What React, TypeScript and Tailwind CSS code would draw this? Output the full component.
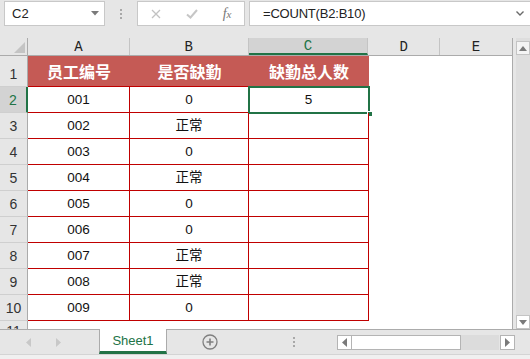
import React from "react";

type Row = { n: string; a: string; b: string; c: string };

const rows: Row[] = [
  { n: "2", a: "001", b: "0", c: "5" },
  { n: "3", a: "002", b: "正常", c: "" },
  { n: "4", a: "003", b: "0", c: "" },
  { n: "5", a: "004", b: "正常", c: "" },
  { n: "6", a: "005", b: "0", c: "" },
  { n: "7", a: "006", b: "0", c: "" },
  { n: "8", a: "007", b: "正常", c: "" },
  { n: "9", a: "008", b: "正常", c: "" },
  { n: "10", a: "009", b: "0", c: "" },
];

const sans = "font-['Liberation_Sans','Noto_Sans_CJK_SC',sans-serif]";
const cjk = "font-['Noto_Sans_CJK_SC',sans-serif]";

const TopBar: React.FC = () => (
  <div className="flex h-[38px] items-start pt-[1px]">
    <div className="ml-[4px] flex h-[25px] w-[101px] items-center justify-between border border-[#c8c8c8] bg-white pl-[7px] pr-[5px]">
      <span className="text-[13px] text-[#222]">C2</span>
      <svg width="8" height="5" viewBox="0 0 8 5">
        <path d="M0 0h8L4 4.5z" fill="#7a7a7a" />
      </svg>
    </div>
    <div className="flex h-[25px] w-[32px] flex-col items-center justify-center gap-[2px]">
      <span className="h-[2px] w-[2px] bg-[#a8a8a8]" />
      <span className="h-[2px] w-[2px] bg-[#a8a8a8]" />
      <span className="h-[2px] w-[2px] bg-[#a8a8a8]" />
    </div>
    <div className="flex h-[25px] w-[108px] items-center justify-around border border-[#c8c8c8] bg-white">
      <svg width="10" height="10" viewBox="0 0 10 10">
        <path d="M1 1l8 8M9 1l-8 8" stroke="#c2c2c2" strokeWidth="1.3" />
      </svg>
      <svg width="12" height="10" viewBox="0 0 12 10">
        <path d="M1 5.5l3.5 3L11 1" stroke="#c6c6c6" strokeWidth="2" fill="none" />
      </svg>
      <span className="font-['Liberation_Serif',serif] text-[14px] italic leading-none text-[#777]">
        f<span className="text-[11px]">x</span>
      </span>
    </div>
    <div className="ml-[4px] flex h-[25px] flex-1 items-center justify-between border-y border-l border-[#c8c8c8] bg-white pl-[13px] pr-[6px]">
      <span className="text-[13px] tracking-[-0.2px] text-[#222]">=COUNT(B2:B10)</span>
      <svg width="8" height="5" viewBox="0 0 8 5">
        <path d="M0.5 0.5L4 4l3.5-3.5" stroke="#6a6a6a" strokeWidth="1.4" fill="none" />
      </svg>
    </div>
  </div>
);

const ColHeaders: React.FC = () => (
  <div className="flex h-[18px] border-b border-[#ababab] bg-[#e6e6e6] font-['Liberation_Mono',monospace] text-[14px] leading-none text-[#222]">
    <div className="relative w-[28px] border-r border-[#ababab]">
      <svg className="absolute bottom-[2px] right-[2px]" width="11" height="11" viewBox="0 0 11 11">
        <path d="M11 0v11H0z" fill="#c4c4c4" />
      </svg>
    </div>
    <div className="flex w-[102px] items-center justify-center border-r border-[#c4c4c4]">A</div>
    <div className="flex w-[119px] items-center justify-center border-r border-[#c4c4c4]">B</div>
    <div className="flex w-[120px] items-center justify-center border-r border-[#c4c4c4] border-b-2 border-b-[#217346] bg-[#d3d3d3] text-[#217346]">C</div>
    <div className="flex w-[72px] items-center justify-center border-r border-[#c4c4c4]">D</div>
    <div className="flex w-[72px] items-center justify-center">E</div>
  </div>
);

const Grid: React.FC = () => (
  <div className="flex w-[513px] flex-col overflow-hidden border-r border-[#ababab] bg-white">
    <ColHeaders />
    <div className="flex h-[31px]">
      <div className={`flex w-[28px] items-end justify-center border-r border-b border-[#ababab] border-b-[#cfcfcf] bg-[#e6e6e6] pb-[1px] ${sans} text-[14px] text-[#333]`}>1</div>
      <div className={`flex w-[341px] border-b border-[#c00000] bg-[#c55a55] ${cjk} text-[16px] font-bold text-white`}>
        <div className="flex w-[102px] items-center justify-center">员工编号</div>
        <div className="flex w-[119px] items-center justify-center">是否缺勤</div>
        <div className="flex w-[120px] items-center justify-center">缺勤总人数</div>
      </div>
    </div>
    {rows.map((r, i) => (
      <div key={r.n} className={`relative flex h-[26px] ${sans} text-[13.5px] text-[#111]`}>
        <div
          className={`flex w-[28px] items-end justify-center border-b border-[#cfcfcf] pb-[1px] text-[14px] ${
            i === 0 ? "border-r-2 border-r-[#217346] bg-[#d3d3d3] text-[#217346]" : "border-r border-r-[#ababab] bg-[#e6e6e6] text-[#333]"
          }`}
        >
          {r.n}
        </div>
        <div className="flex w-[102px] items-center justify-center border-r border-b border-[#c00000] pt-[2px]">{r.a}</div>
        <div className="flex w-[119px] items-center justify-center border-r border-b border-[#c00000] pt-[2px]">{r.b}</div>
        <div className="flex w-[120px] items-center justify-center border-r border-b border-[#c00000] pt-[2px]">{r.c}</div>
        {i === 0 && (
          <div className="absolute left-[248px] top-[-1px] h-[28px] w-[122px] border-2 border-[#217346]">
            <span className="absolute bottom-[-5px] right-[-5px] h-[6px] w-[6px] border border-white bg-[#217346]" />
          </div>
        )}
      </div>
    ))}
    <div className={`flex h-[8px] overflow-hidden ${sans} text-[14px] text-[#333]`}>
      <div className="flex w-[28px] justify-center border-r border-[#ababab] bg-[#e6e6e6] pt-[3px] leading-none">11</div>
    </div>
  </div>
);

const VScroll: React.FC = () => (
  <div className="ml-[3px] flex w-[14px] flex-col bg-[#dedede] pt-[3px]">
    <div className="flex h-[14px] items-center justify-center border border-[#c4c4c4] bg-[#f4f4f4]">
      <svg width="8" height="5" viewBox="0 0 8 5">
        <path d="M0 5h8L4 0z" fill="#7a7a7a" />
      </svg>
    </div>
    <div className="flex-1" />
    <div className="flex h-[14px] items-center justify-center border border-[#c4c4c4] bg-white">
      <svg width="8" height="5" viewBox="0 0 8 5">
        <path d="M0 0h8L4 5z" fill="#7a7a7a" />
      </svg>
    </div>
  </div>
);

const BottomBar: React.FC = () => (
  <div className="flex flex-col">
    <div className="flex h-[25px] items-stretch border-t border-[#ababab]">
      <div className="flex w-[99px] items-center pl-[26px] gap-[25px]">
        <svg width="5" height="9" viewBox="0 0 5 9">
          <path d="M5 0v9L0 4.5z" fill="#c8c8c8" />
        </svg>
        <svg width="5" height="9" viewBox="0 0 5 9">
          <path d="M0 0v9l5-4.5z" fill="#c8c8c8" />
        </svg>
      </div>
      <div className={`mt-[-1px] flex w-[68px] items-center justify-center border-x border-b-[3px] border-x-[#ababab] border-b-[#217346] bg-white pt-[1px] ${sans} text-[13px] text-[#217346]`}>
        Sheet1
      </div>
      <div className="flex w-[84px] items-center pl-[35px]">
        <svg width="16" height="16" viewBox="0 0 16 16">
          <circle cx="8" cy="8" r="7" stroke="#7f7f7f" strokeWidth="1.3" fill="none" />
          <path d="M8 4.5v7M4.5 8h7" stroke="#7f7f7f" strokeWidth="1.6" />
        </svg>
      </div>
      <div className="flex w-[86px] flex-col items-center justify-center gap-[2px]">
        <span className="h-[2px] w-[2px] bg-[#a8a8a8]" />
        <span className="h-[2px] w-[2px] bg-[#a8a8a8]" />
        <span className="h-[2px] w-[2px] bg-[#a8a8a8]" />
      </div>
      <div className="flex items-center">
        <div className="flex h-[15px] w-[178px]">
          <div className="flex w-[15px] items-center justify-center border border-[#b4b4b4] bg-white">
            <svg width="5" height="9" viewBox="0 0 5 9">
              <path d="M5 0v9L0 4.5z" fill="#7a7a7a" />
            </svg>
          </div>
          <div className="w-[109px] border-y border-r border-[#b4b4b4] bg-white" />
          <div className="w-[38px] bg-[#dcdcdc]" />
          <div className="ml-[1px] flex w-[15px] items-center justify-center border border-[#b4b4b4] bg-white">
            <svg width="5" height="9" viewBox="0 0 5 9">
              <path d="M0 0v9l5-4.5z" fill="#7a7a7a" />
            </svg>
          </div>
        </div>
      </div>
    </div>
    <div className="h-[5px] border-t border-[#d4d4d4] bg-[#f0f0f0]" />
  </div>
);

const App: React.FC = () => {
  return (
    <div className={`flex h-[359px] w-[530px] flex-col overflow-hidden bg-[#e6e6e6] ${sans}`}>
      <TopBar />
      <div className="flex h-[291px]">
        <Grid />
        <VScroll />
      </div>
      <BottomBar />
    </div>
  );
};

export default App;
